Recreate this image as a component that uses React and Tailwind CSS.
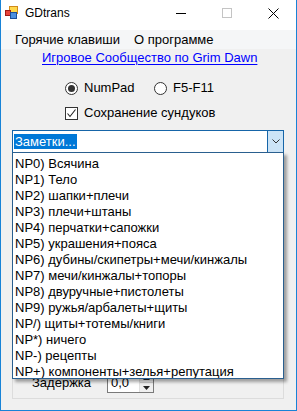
import React from "react";

const items = [
  "NP0) Всячина",
  "NP1) Тело",
  "NP2) шапки+плечи",
  "NP3) плечи+штаны",
  "NP4) перчатки+сапожки",
  "NP5) украшения+пояса",
  "NP6) дубины/скипетры+мечи/кинжалы",
  "NP7) мечи/кинжалы+топоры",
  "NP8) двуручные+пистолеты",
  "NP9) ружья/арбалеты+щиты",
  "NP/) щиты+тотемы/книги",
  "NP*) ничего",
  "NP-) рецепты",
  "NP+) компоненты+зелья+репутация",
];

function AppIcon() {
  return (
    <svg width="14" height="14" viewBox="0 0 14 14">
      <rect x="4.5" y="0.5" width="8" height="7" fill="#ffd84a" stroke="#d08a1a" />
      <rect x="0.5" y="4.5" width="5" height="5" fill="#e8433a" stroke="#a11a14" />
      <rect x="5.5" y="6.5" width="6" height="6" fill="#4c8fe0" stroke="#1d4f9a" />
    </svg>
  );
}

export default function App() {
  return (
    <div className="w-[297px] h-[411px] bg-[#f0f0f0] border-x border-b border-[#1883d7] flex flex-col overflow-hidden font-['Liberation_Sans',Arial,sans-serif] text-[13px] text-black">
      {/* title bar */}
      <div className="h-[30px] shrink-0 bg-white flex items-start">
        <div className="h-[26px] flex items-center pl-[4px]">
          <AppIcon />
        </div>
        <div className="h-[26px] flex items-center pl-[6px] text-[12px] leading-none">GDtrans</div>
        <div className="ml-auto flex">
          <div className="w-[46px] h-[26px] flex items-center justify-center">
            <div className="w-[10px] h-px bg-black" />
          </div>
          <div className="w-[46px] h-[26px] flex items-center justify-center">
            <div className="w-[10px] h-[10px] border border-[#c4c4c4]" />
          </div>
          <div className="w-[46px] h-[26px] flex items-center justify-center">
            <svg width="11" height="11" viewBox="0 0 11 11">
              <path d="M0.5 0.5 L10.5 10.5 M10.5 0.5 L0.5 10.5" stroke="#000" strokeWidth="1" />
            </svg>
          </div>
        </div>
      </div>

      {/* menu bar */}
      <div className="h-[19px] shrink-0 bg-[#f5f6f7] flex items-center pl-[14px] leading-[16px]">
        <div className="w-[119px]">Горячие клавиши</div>
        <div>О программе</div>
      </div>

      {/* link */}
      <div className="mt-[1px] pl-[41px] leading-[16px]">
        <span className="text-[#0000ff] underline underline-offset-[2px]">Игровое Сообщество по Grim Dawn</span>
      </div>

      {/* radios */}
      <div className="mt-[14px] h-[16px] flex items-center pl-[64px]">
        <div className="w-[13px] h-[13px] rounded-full border border-[#333] bg-white flex items-center justify-center">
          <div className="w-[7px] h-[7px] rounded-full bg-[#333]" />
        </div>
        <span className="ml-[6px] w-[70px] leading-[16px]">NumPad</span>
        <div className="w-[13px] h-[13px] rounded-full border border-[#333] bg-white" />
        <span className="ml-[6px] leading-[16px]">F5-F11</span>
      </div>

      {/* checkbox */}
      <div className="mt-[9px] h-[16px] flex items-center pl-[64px]">
        <div className="w-[13px] h-[13px] border border-[#333] bg-white flex items-center justify-center">
          <svg width="11" height="11" viewBox="0 0 11 11">
            <path d="M1.5 5.5 L4 8.5 L9.5 1.5" fill="none" stroke="#222" strokeWidth="1.1" />
          </svg>
        </div>
        <span className="ml-[6px] leading-[16px]">Сохранение сундуков</span>
      </div>

      {/* combobox */}
      <div className="mt-[9px] ml-[11px] w-[272px] relative z-10 shrink-0">
        <div className="h-[23px] border border-[#1665a8] bg-white flex">
          <div className="flex-1 flex items-center pl-[1px]">
            <span className="bg-[#0078d7] text-white leading-[15px] px-[1px]">Заметки...</span>
          </div>
          <div className="w-[16px] bg-[#cce4f7] border-l border-[#1665a8] flex items-center justify-center">
            <svg width="8" height="5" viewBox="0 0 8 5">
              <path d="M0.5 0.5 L4 4 L7.5 0.5" fill="none" stroke="#333" strokeWidth="1" />
            </svg>
          </div>
        </div>
        <div className="absolute left-0 top-[22px] w-[272px] h-[227px] overflow-hidden bg-white border border-[#2a5f8f] pt-[2px] shadow-[3px_3px_3px_rgba(0,0,0,0.35)]">
          {items.map((t) => (
            <div key={t} className="h-[16px] leading-[17px] pl-[2px] whitespace-nowrap">
              {t}
            </div>
          ))}
        </div>
      </div>

      {/* group box behind */}
      <div className="mt-[7px] ml-[11px] w-[272px] h-[239px] shrink-0 border border-[#dcdcdc] flex flex-col justify-end pb-[5px]">
        <div className="flex items-center h-[21px]">
          <span className="pl-[19px] w-[94px] leading-[16px]">Задержка</span>
          <div className="w-[47px] h-[21px] border border-[#7a7a7a] bg-white flex">
            <span className="flex-1 pl-[3px] leading-[19px]">0,0</span>
            <div className="w-[14px] flex flex-col border-l border-[#e0e0e0]">
              <div className="flex-1 bg-[#f0f0f0] border-b border-[#d0d0d0] flex items-center justify-center">
                <svg width="7" height="4" viewBox="0 0 7 4"><path d="M0 4 L3.5 0 L7 4 Z" fill="#222" /></svg>
              </div>
              <div className="flex-1 bg-[#f0f0f0] flex items-center justify-center">
                <svg width="7" height="4" viewBox="0 0 7 4"><path d="M0 0 L3.5 4 L7 0 Z" fill="#222" /></svg>
              </div>
            </div>
          </div>
        </div>
      </div>
    </div>
  );
}
